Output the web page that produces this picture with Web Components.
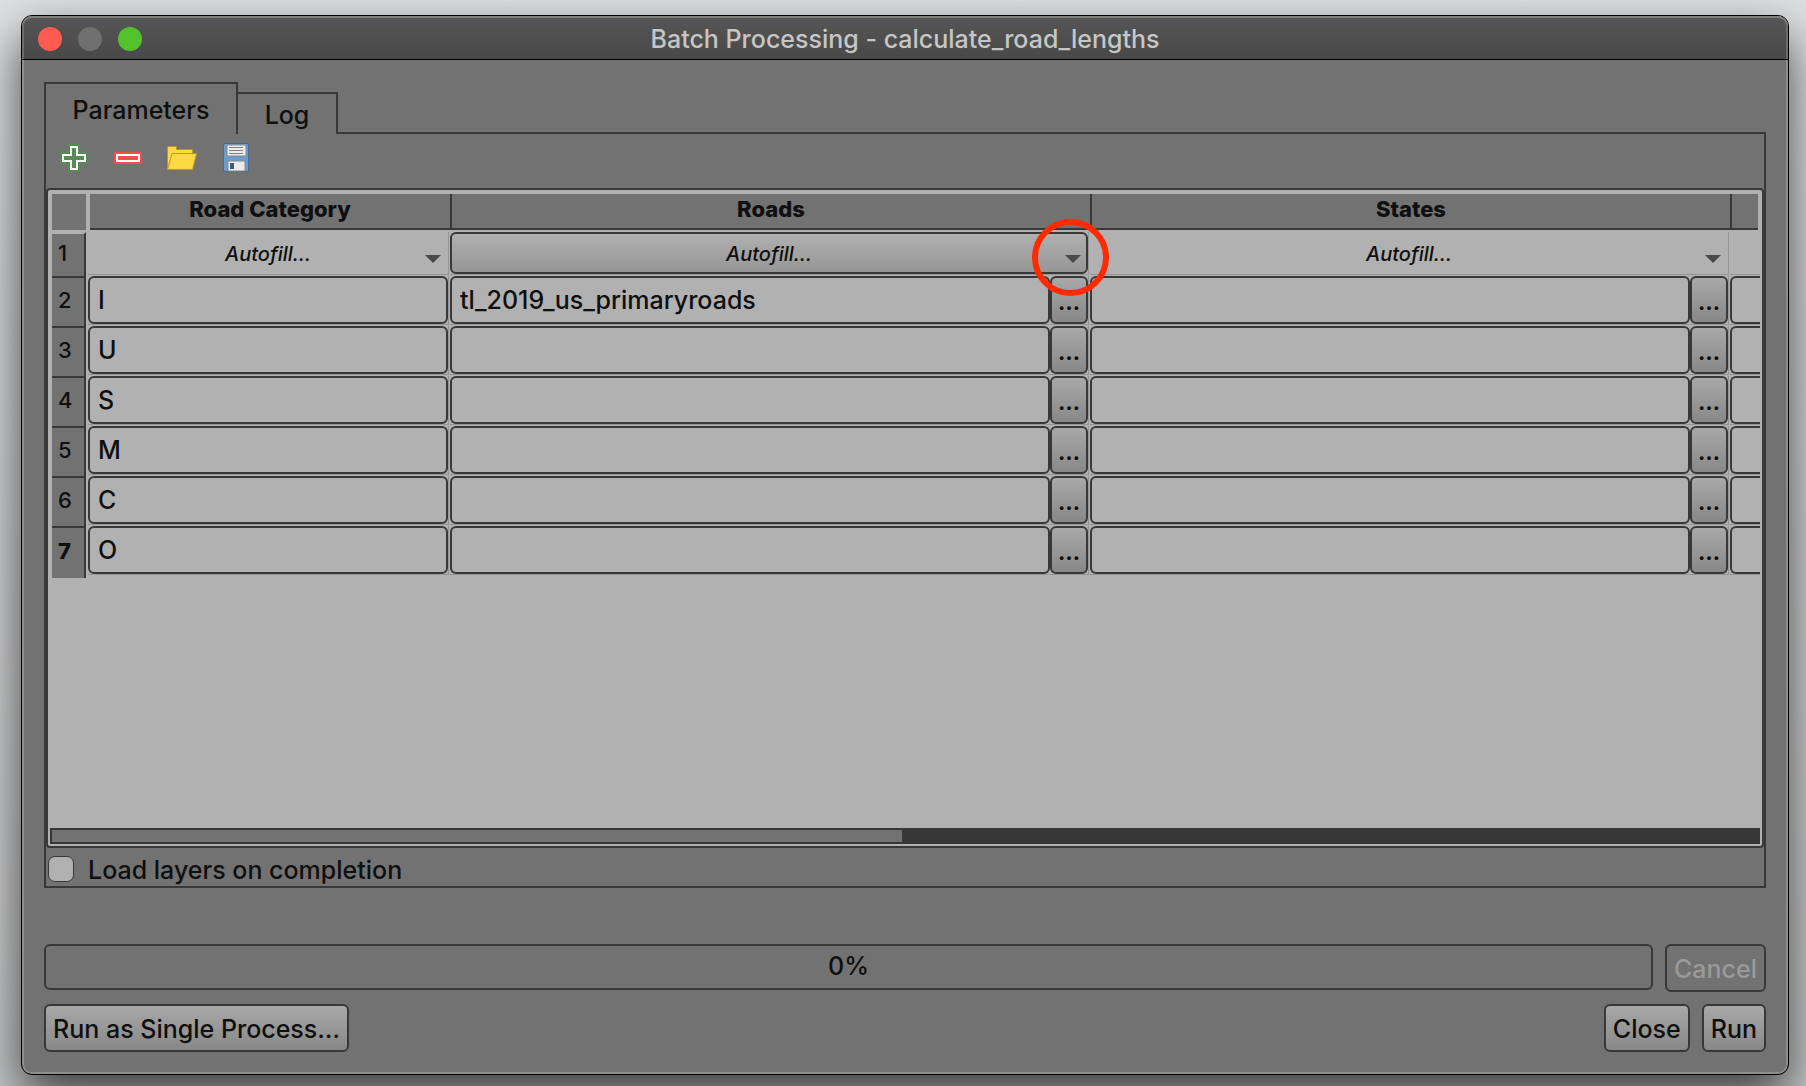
<!DOCTYPE html>
<html lang="en">
<head>
<meta charset="utf-8">
<title>Batch Processing - calculate_road_lengths</title>
<style>
  :root {
    --face: #727272; --base: #b1b1b1; --line: #383838; --grid: #969696; --ink: #0f0f0f;
    --raised: linear-gradient(#a8a8a8, #888888);
  }
  html { height: 100%; }
  body {
    margin: 0; min-height: 100vh; box-sizing: border-box; padding: 15px 17px 11px 21px;
    display: flex; overflow: hidden; background: linear-gradient(#dfe0e2, #c8c9ca);
    font: 500 25px/32px Inter, "Liberation Sans", sans-serif; color: var(--ink);
  }
</style>
</head>
<body>
<dialog-window heading="Batch Processing - calculate_road_lengths">
  <tab-pane>
    <icon-bar></icon-bar>
    <batch-grid></batch-grid>
    <check-option>Load layers on completion</check-option>
  </tab-pane>
  <progress-row slot="footer"></progress-row>
  <action-row slot="footer"></action-row>
</dialog-window>

<script>
const RESET = `
  :host, *, *::before, *::after { box-sizing: border-box; }
  button, input { font: inherit; color: inherit; margin: 0; }
`;
const define = (name, render) => customElements.define(name, class extends HTMLElement {
  connectedCallback() {
    if (this.shadowRoot) return;
    this.attachShadow({ mode: 'open' }).innerHTML = '<style>' + RESET + '</style>' + render(this);
  }
});

define('push-button', host => `
  <style>
    :host { display: block; }
    button {
      display: block; height: 48px; padding: 2px 7px 0; border: 2px solid var(--line);
      border-radius: 6px; background: var(--raised); white-space: nowrap;
    }
    button:disabled { background: none; color: #9a9a9a; }
  </style>
  <button type="button" ${host.hasAttribute('disabled') ? 'disabled' : ''}><slot></slot></button>`);

define('dialog-window', host => `
  <style>
    :host {
      flex: 1; display: flex; flex-direction: column; border: 1px solid #000; border-radius: 11px;
      background: var(--face);
      box-shadow: inset 0 0 0 2px #8e8e8e, 0 22px 50px rgba(0,0,0,.7);
    }
    header {
      display: grid; grid-template-columns: 1fr auto 1fr; align-items: center; height: 44px;
      padding: 2px 16px 0; border-bottom: 1px solid #000; border-radius: 10px 10px 0 0;
      background: linear-gradient(#565656, #484848); color: #c6c6c6;
      box-shadow: inset 0 2px 0 #80827e, inset 2px 0 0 #6c6c6c, inset -2px 0 0 #6c6c6c;
    }
    h1 { margin: 0; font: inherit; }
    .lights { display: flex; gap: 16px; }
    .lights button { width: 24px; height: 24px; padding: 0; border: 0; border-radius: 50%; background: #ff5b51; }
    .lights button:nth-child(2) { background: #6f6f6f; }
    .lights button:nth-child(3) { background: #54c22c; }
    main { flex: 1; display: flex; flex-direction: column; padding: 22px; }
    ::slotted(tab-pane) { flex: 1; }
    footer { display: flex; flex-direction: column; gap: 12px; padding-top: 56px; }
  </style>
  <header>
    <div class="lights">
      <button type="button" aria-label="Close window"></button>
      <button type="button" aria-label="Minimize" disabled></button>
      <button type="button" aria-label="Zoom"></button>
    </div>
    <h1>${host.getAttribute('heading')}</h1>
  </header>
  <main><slot></slot><footer><slot name="footer"></slot></footer></main>`);

define('tab-pane', () => `
  <style>
    :host { display: flex; flex-direction: column; }
    [role=tablist] { display: flex; align-items: flex-end; height: 52px; }
    [role=tab] { border: 2px solid var(--line); border-bottom: 0; background: none; padding: 2px 0 0; }
    .on { width: 194px; height: 52px; }
    .off { width: 100px; height: 42px; border-left: 0; }
    .rest { flex: 1; height: 2px; background: var(--line); }
    section { flex: 1; display: flex; flex-direction: column; border: 2px solid var(--line); border-top: 0; }
  </style>
  <div role="tablist">
    <button class="on" role="tab" aria-selected="true">Parameters</button>
    <button class="off" role="tab" aria-selected="false">Log</button>
    <span class="rest"></span>
  </div>
  <section role="tabpanel"><slot></slot></section>`);

define('icon-bar', () => `
  <style>
    :host { display: flex; gap: 22px; height: 54px; padding: 8px 12px; }
    button { width: 32px; height: 32px; padding: 0; border: 0; background: none; }
    svg { display: block; width: 32px; height: 32px; }
  </style>
  <button type="button" aria-label="Add row"><svg viewBox="0 0 32 32">
    <path d="M10 2h12v8h8v12h-8v8H10v-8H2V10h8z" fill="#578c54"/>
    <path d="M12 4h8v8h8v8h-8v8h-8v-8H4v-8h8z" fill="#fff"/>
    <path d="M14 6h4v8h8v4h-8v8h-4v-8H6v-4h8z" fill="#578c54"/></svg></button>
  <button type="button" aria-label="Remove row"><svg viewBox="0 0 32 32">
    <path d="M2 10h28v12H2z" fill="#ef4f4f"/><path d="M4 12h24v8H4z" fill="#fff"/><path d="M6 14h20v4H6z" fill="#ef4f4f"/></svg></button>
  <button type="button" aria-label="Open"><svg viewBox="0 0 32 32">
    <path d="M1.500 27.500v-23h9v3h16v4.500h3.800L26.500 27.500z" fill="#fcd942" stroke="#b39a2f"/>
    <path d="M1.500 27.500L6 11.500h24.500L26.500 27.500z" fill="#fcd942" stroke="#b39a2f"/></svg></button>
  <button type="button" aria-label="Save"><svg viewBox="0 0 32 32">
    <rect x="3.500" y="1.500" width="25" height="28" rx="1.500" fill="#6c9bcf" stroke="#4a6a90"/>
    <path d="M7 3h19v11H7z" fill="#ececec" stroke="#888"/>
    <path d="M9 5.500h14M9 8.500h14M9 11.500h14" stroke="#808080"/>
    <path d="M8 19h17v10H8z" fill="#ececec" stroke="#888"/><path d="M10 21h4v6h-4z" fill="#3f5876"/></svg></button>`);

define('autofill-button', () => `
  <style>
    :host { display: block; position: relative; }
    button {
      display: grid; grid-template-columns: 1fr auto 1fr; align-items: center; width: 100%; height: 42px;
      padding: 0 5px; border: 2px solid transparent; border-radius: 6px; background: none;
      font-size: 20px; line-height: 24px; font-style: italic;
    }
    :host([active]) button { border-color: var(--line); background: linear-gradient(#b0b0b0, #969696) padding-box; }
    :host([ringed])::after {
      content: ""; position: absolute; z-index: 1; top: -13px; right: -21px; width: 77px; height: 77px;
      border: 6px solid #ff2a00; border-radius: 50%; pointer-events: none;
    }
    span { grid-column: 2; padding-top: 2px; }
    svg { justify-self: end; width: 16px; height: 8px; margin-top: 12px; }
  </style>
  <button type="button" aria-haspopup="menu"><span>Autofill…</span>
    <svg viewBox="0 0 16 8"><path d="M0 0h16L8 8z" fill="#4a4a4a"/></svg></button>`);

define('value-cell', host => `
  <style>
    :host { display: flex; height: 48px; }
    input {
      flex: 1; min-width: 0; height: 48px; padding: 0 8px; border: 2px solid var(--line);
      border-radius: 6px; background: var(--base); outline: 0;
    }
    :host([clipped]) input { border-right: 0; border-radius: 6px 0 0 6px; }
    button {
      width: 38px; height: 48px; padding: 4px 0 0; border: 2px solid var(--line); border-radius: 6px;
      background: var(--raised); font-weight: 700; font-size: 22px; line-height: 24px;
    }
  </style>
  <input type="text" aria-label="${host.getAttribute('label')}" value="${host.getAttribute('value') || ''}">
  ${host.hasAttribute('browse') ? '<button type="button" aria-label="Browse">…</button>' : ''}`);

define('batch-grid', () => {
  const rows = ['I', 'U', 'S', 'M', 'C', 'O'];
  const cell = inner => `<td><div class="cell">${inner}</div></td>`;
  return `
  <style>
    :host {
      flex: 1; display: flex; flex-direction: column; justify-content: space-between;
      border: 2px solid var(--line); border-radius: 4px; background: var(--base); padding: 4px 0 2px;
    }
    .view { padding: 0 2px 0 4px; overflow: hidden; }
    table { width: 100%; table-layout: fixed; border-spacing: 0; }
    th, td { padding: 0; text-align: center; vertical-align: top; }
    .num { width: 36px; } .cat { width: 362px; } .src { width: 640px; }
    thead th { height: 38px; font-size: 22px; line-height: 30px; font-weight: 800; }
    thead div { height: 36px; border: solid var(--line); border-width: 0 0 2px 2px; background: var(--face); }
    thead th:first-child div { margin-right: 2px; border: 0; }
    thead th:nth-child(2) div { margin-left: 2px; border-left: 0; }
    thead th:last-child div { margin-right: 2px; }
    tbody th div {
      height: 50px; margin-right: 2px; border-right: 2px solid var(--line); border-top: 2px solid var(--line);
      background: var(--face); text-align: left; padding-left: 6px;
      font-size: 22px; line-height: 44px; font-weight: 500;
    }
    tbody tr:first-child th div { height: 44px; border-top-color: var(--base); line-height: 38px; }
    tbody tr:last-child th div { height: 52px; font-weight: 800; line-height: 46px; }
    td { padding: 0 1px 1px 0; }
    .cell { border-right: 1px solid var(--grid); border-bottom: 1px solid var(--grid); }
    td:last-child { padding-right: 0; }
    td:last-child .cell { border-right: 0; }
    .blank { height: 43px; }
    .bar { height: 16px; margin: 0 2px; background: #373737; padding: 2px; }
    .bar div { width: 49.8%; height: 12px; background: var(--face); }
  </style>
  <div class="view"><table>
    <colgroup><col class="num"><col class="cat"><col class="src"><col class="src"><col></colgroup>
    <thead><tr><th><div></div></th><th scope="col"><div>Road Category</div></th><th scope="col"><div>Roads</div></th>
      <th scope="col"><div>States</div></th><th><div></div></th></tr></thead>
    <tbody>
      <tr><th scope="row"><div>1</div></th>${cell('<autofill-button></autofill-button>')}${cell('<autofill-button active ringed></autofill-button>')}${cell('<autofill-button></autofill-button>')}<td><div class="cell blank"></div></td></tr>
      ${rows.map((v, i) => `<tr><th scope="row"><div>${i + 2}</div></th>
        ${cell(`<value-cell label="Road Category ${i + 2}" value="${v}"></value-cell>`)}
        ${cell(`<value-cell browse label="Roads ${i + 2}" value="${i ? '' : 'tl_2019_us_primaryroads'}"></value-cell>`)}
        ${cell(`<value-cell browse label="States ${i + 2}"></value-cell>`)}
        ${cell(`<value-cell clipped label="Next column ${i + 2}"></value-cell>`)}</tr>`).join('')}
    </tbody>
  </table></div>
  <div class="bar"><div></div></div>`;
});

define('check-option', () => `
  <style>
    :host { display: block; }
    label { display: flex; align-items: center; gap: 14px; height: 38px; padding: 4px 2px 0; }
    input {
      appearance: none; width: 26px; height: 26px; border: 1px solid var(--line); border-radius: 7px;
      background: var(--base);
    }
    span { padding-top: 2px; }
  </style>
  <label><input type="checkbox"><span><slot></slot></span></label>`);

define('progress-row', () => `
  <style>
    :host { display: flex; align-items: flex-start; gap: 12px; }
    [role=progressbar] {
      flex: 1; height: 46px; border: 2px solid var(--line); border-radius: 6px; text-align: center; line-height: 40px;
    }
  </style>
  <div role="progressbar" aria-valuenow="0" aria-valuemin="0" aria-valuemax="100">0%</div>
  <push-button disabled>Cancel</push-button>`);

define('action-row', () => `
  <style>
    :host { display: flex; gap: 12px; }
    .lead { margin-right: auto; }
  </style>
  <push-button class="lead">Run as Single Process…</push-button>
  <push-button>Close</push-button>
  <push-button>Run</push-button>`);
</script>
</body>
</html>
